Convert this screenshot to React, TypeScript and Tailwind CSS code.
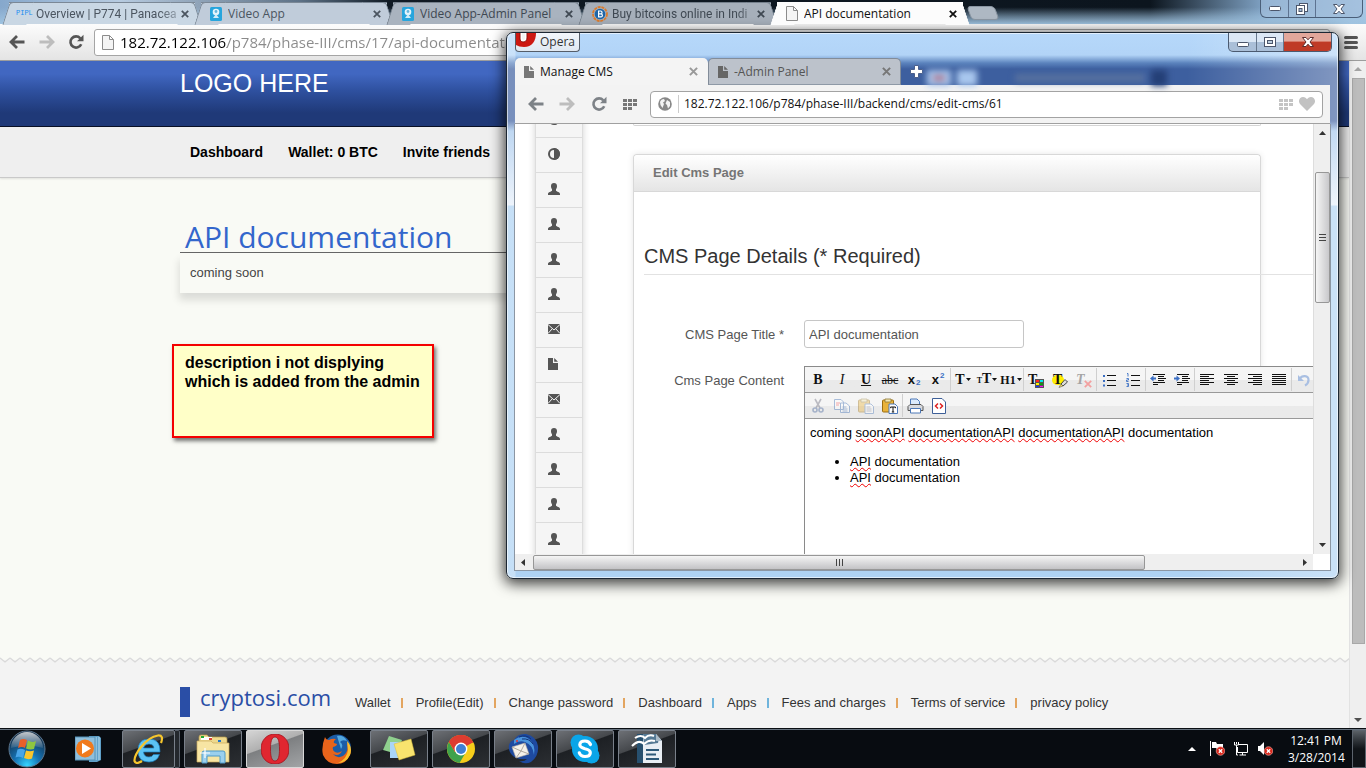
import React from "react";

const ui = "font-['Open_Sans','Noto_Sans',sans-serif]";
const arial = "font-['Liberation_Sans',Arial,sans-serif]";

/* ---------- small drawings ---------- */

function CloseX({ className = "" }: { className?: string }) {
  return (
    <svg viewBox="0 0 8 8" className={`size-2 ${className}`} stroke="currentColor" strokeWidth="1.8">
      <path d="M.8 .8 7.2 7.2M7.2 .8 .8 7.2" />
    </svg>
  );
}

function PageIcon() {
  return (
    <svg viewBox="0 0 12 15" className="h-[15px] w-3 shrink-0" fill="#f4f4f4" stroke="#8b8b8b">
      <path d="M.5 .5H7.5L11.5 4.5V14.5H.5ZM7.5 .5V4.5H11.5" />
    </svg>
  );
}

function DocIcon({ className = "h-3 w-[10px]" }: { className?: string }) {
  return (
    <svg viewBox="0 0 10 12" className={`shrink-0 ${className}`} fill="currentColor">
      <path d="M0 0H5V5H10V12H0ZM6.2 0 10 3.8H6.2Z" />
    </svg>
  );
}

function BackArrow() {
  return (
    <svg viewBox="0 0 16 14" className="h-[14px] w-4" fill="none" stroke="currentColor" strokeWidth="2.8">
      <path d="M15.5 7H2.5M8 1 2 7 8 13" />
    </svg>
  );
}

function Reload() {
  return (
    <svg viewBox="0 0 16 16" className="size-4" fill="none" stroke="currentColor" strokeWidth="2.6">
      <path d="M12.3 4.3A5.6 5.6 0 1 0 13.2 10.2" />
      <path d="M15.5 .8V7.2H9Z" fill="currentColor" stroke="none" />
    </svg>
  );
}

function Grid({ className = "" }: { className?: string }) {
  return (
    <svg viewBox="0 0 14 11" className={`h-[11px] w-[14px] ${className}`} fill="currentColor">
      <path d="M0 0h4v3H0zM5 0h4v3H5zM10 0h4v3h-4zM0 4h4v3H0zM5 4h4v3H5zM10 4h4v3h-4zM0 8h4v3H0zM5 8h4v3H5z" />
    </svg>
  );
}

function VideoFav() {
  return (
    <svg viewBox="0 0 12 14" className="h-[14px] w-3 shrink-0">
      <rect width="12" height="14" rx="1.5" fill="#27a5dd" />
      <circle cx="6" cy="5" r="3.3" fill="#e5f5fc" />
      <circle cx="6" cy="4.5" r="1.4" fill="#68b6dc" />
      <path d="M3 11 6 7 9 11Z" fill="#d3ecf7" />
    </svg>
  );
}

function BitcoinFav() {
  return (
    <svg viewBox="0 0 16 16" className="size-4 shrink-0">
      <circle cx="8" cy="8" r="7" fill="none" stroke="#dc7b2c" strokeWidth="1.8" strokeDasharray="3 .8" />
      <circle cx="8" cy="8" r="5.3" fill="#1f66a8" />
      <path d="M6 5h2.6a1.4 1.4 0 0 1 0 2.9H6.3h2.6a1.5 1.5 0 0 1 0 3H6M6.6 5v6" fill="none" stroke="#fff" strokeWidth="1.2" />
    </svg>
  );
}

function Minimize() {
  return (
    <svg viewBox="0 0 12 5" className="h-[5px] w-3" fill="#fff" stroke="#4c566b">
      <rect x=".5" y=".5" width="11" height="4" rx="1" />
    </svg>
  );
}

function BoldCross({ tone = "#4c566b" }: { tone?: string }) {
  return (
    <svg viewBox="0 0 12 10" className="h-[10px] w-3" fill="#fff" stroke={tone}>
      <path d="M.5 .5H4L6 2.8 8 .5H11.5L8 5 11.5 9.5H8L6 7.2 4 9.5H.5L4 5Z" />
    </svg>
  );
}

function UserIcon() {
  return (
    <svg viewBox="0 0 12 12" className="size-3" fill="currentColor">
      <path d="M6 0C7.9 0 9 1.2 9 3c0 1.400-.3 2.400-1 3.200v1.600C8.600 8.700 12 9 12 11v1H0v-1c0-2 3.400-2.300 4-3.200V6.200C3.300 5.400 3 4.400 3 3c0-1.800 1.100-3 3-3Z" />
    </svg>
  );
}

function MailIcon() {
  return (
    <svg viewBox="0 0 12 10" className="h-[10px] w-3">
      <rect width="12" height="10" fill="currentColor" />
      <path d="M0 .5 6 6 12 .5M0 9.500 4.200 4.800M12 9.500 7.800 4.800" fill="none" stroke="#f5f5f5" />
    </svg>
  );
}

function ContrastIcon() {
  return (
    <svg viewBox="0 0 12 12" className="size-3">
      <circle cx="6" cy="6" r="5" fill="none" stroke="currentColor" strokeWidth="2" />
      <path d="M6 0a6 6 0 0 1 0 12Z" fill="currentColor" />
    </svg>
  );
}

/* ---------- background browser ---------- */

type Tab = { title: string; icon: React.ReactNode; tone: string; active?: boolean; long?: boolean };

const tabs: Tab[] = [
  { title: "Overview | P774 | Panacea", long: true, icon: <span className="w-4 font-['Liberation_Mono',monospace] text-[7px] text-[#1d8df0]">PIPL</span>, tone: "bg-[#c9d7e4] border-[#7b8896] text-[#4b5560]" },
  { title: "Video App", icon: <VideoFav />, tone: "bg-[#c0ccda] border-[#7b8896] text-[#4b5560]" },
  { title: "Video App-Admin Panel", icon: <VideoFav />, tone: "bg-[#a9b3bf] border-[#75808c] text-[#3f4852]" },
  { title: "Buy bitcoins online in Indi", long: true, icon: <BitcoinFav />, tone: "bg-[#a6afba] border-[#75808c] text-[#3f4852]" },
  { title: "API documentation", icon: <PageIcon />, tone: "bg-[#fcfcfc] border-[#fcfcfc] text-[#111]", active: true },
];

function ChromeTabs() {
  return (
    <div className="flex h-6 items-end justify-between bg-[linear-gradient(180deg,transparent_30%,#9fc3e0_100%),linear-gradient(90deg,#86a8cc_0px,#b7cbe0_120px,#5d7186_300px,#101a24_390px,#0c151e_1150px,#86aacd_1270px,#a9c8e6_100%)]">
      <div role="tablist" className="flex h-[22px] gap-[6px] pl-[9px]">
        {tabs.map((t) => (
          <div
            key={t.title}
            role="tab"
            aria-selected={!!t.active}
            className={`relative isolate flex w-[186px] items-center border-t pr-[6px] text-[12px] before:absolute before:-top-px before:-left-[3px] before:-z-10 before:h-[23px] before:w-6 before:-skew-x-[18deg] before:rounded-tl-[4px] before:border-t before:border-l before:border-inherit before:bg-inherit after:absolute after:-top-px after:-right-[3px] after:-z-10 after:h-[23px] after:w-6 after:skew-x-[18deg] after:rounded-tr-[4px] after:border-t after:border-r after:border-inherit after:bg-inherit ${t.tone} ${t.long ? "pl-[7px]" : "pl-[9px]"} ${t.active ? "z-10" : ""}`}
          >
            {t.icon}
            <span className={`min-w-0 flex-1 overflow-hidden whitespace-nowrap ${t.long ? "ml-1 font-['Roboto','Open_Sans',sans-serif] [mask-image:linear-gradient(90deg,#000_85%,rgba(0,0,0,.25))]" : "ml-[6px]"}`}>{t.title}</span>
            <button aria-label={`Close ${t.title}`}>
              <CloseX />
            </button>
          </div>
        ))}
        <button aria-label="New tab" className="mt-1 h-[14px] w-7 skew-x-[20deg] rounded-sm border border-[#8b96a2] bg-[#aeb8c3]" />
      </div>
      <div className="mr-[3px] flex h-[18px] w-[103px] self-start rounded-b-md border border-t-0 border-[#4b5f79] bg-[#a3bedb]/60">
        <button aria-label="Minimize browser" className="flex w-7 items-center justify-center border-r border-[#5d7391]"><Minimize /></button>
        <button aria-label="Restore browser" className="flex w-[27px] items-center justify-center border-r border-[#5d7391]">
          <svg viewBox="0 0 12 12" className="size-3" fill="#fff" stroke="#4c566b">
            <rect x="3.500" y=".5" width="8" height="8" />
            <rect x=".5" y="2.500" width="8" height="9" />
            <rect x="3" y="5.500" width="3" height="3" fill="#a3bedb" />
          </svg>
        </button>
        <button aria-label="Close browser" className="flex flex-1 items-center justify-center"><BoldCross /></button>
      </div>
    </div>
  );
}

function ChromeToolbar() {
  return (
    <div className="flex h-[37px] items-center border-b border-[#9d9d9d] bg-linear-to-b from-[#fcfcfc] to-[#e4e4e4] pr-2 pl-[9px] text-[#555]">
      <button aria-label="Back" className="flex w-[30px]"><BackArrow /></button>
      <button aria-label="Forward" className="flex w-[29px] rotate-180 justify-end text-[#bdbdbd]"><BackArrow /></button>
      <button aria-label="Reload" className="flex w-[26px]"><Reload /></button>
      <div className="flex h-[27px] flex-1 items-center gap-[6px] rounded-[3px] border border-[#a5a5a5] bg-white pl-[7px]">
        <PageIcon />
        <input
          aria-label="Address"
          defaultValue="182.72.122.106/p784/phase-III/cms/17/api-documentation"
          className="min-w-0 flex-1 bg-[linear-gradient(90deg,#000_107px,#8a8a8a_107px)] bg-clip-text text-[15px] text-transparent outline-none"
        />
      </div>
      <button aria-label="Menu" className="ml-[14px] flex w-[14px] flex-col gap-[2px]">
        <span className="h-[3px] w-full rounded-sm bg-[#555]" />
        <span className="h-[3px] w-full rounded-sm bg-[#555]" />
        <span className="h-[3px] w-full rounded-sm bg-[#555]" />
      </button>
    </div>
  );
}

const footerLinks = ["Wallet", "Profile(Edit)", "Change password", "Dashboard", "Apps", "Fees and charges", "Terms of service", "privacy policy"];

function SitePage() {
  return (
    <div className={`relative flex min-w-0 flex-1 flex-col overflow-hidden bg-[#f9faf5] ${arial}`}>
      <header className="h-[66px] border-b border-[#0a1126] bg-linear-to-b from-[#4167c1] from-20% via-[#2f51a0] via-45% to-[#1f3978] to-80%">
        <div className="mx-auto w-full max-w-[989px] pt-[7px] text-[25px] leading-[30px] text-white">LOGO HERE</div>
      </header>
      <nav className="border-b border-[#c9c9c9] bg-[#efefef] shadow-[0_1px_2px_rgba(0,0,0,.1)]">
        <div className="mx-auto flex h-[50px] w-full max-w-[989px] items-center gap-[25px] pl-[10px] text-[14px] font-bold text-black">
          <a href="#dashboard">Dashboard</a>
          <a href="#wallet">Wallet: 0 BTC</a>
          <a href="#invite">Invite friends</a>
        </div>
      </nav>
      <main className="mx-auto w-full max-w-[989px] flex-1">
        <h1 className={`flex h-[75px] items-end border-b border-[#666] pl-[5px] text-[30px] leading-[30px] text-[#3366cc] ${ui}`}>API documentation</h1>
        <p className="pt-[10px] pb-[10px] pl-[10px] text-[13px] leading-5 text-[#444] shadow-[-1px_7px_8px_rgba(0,0,0,.12)]">coming soon</p>
      </main>
      <div className="absolute top-[283px] left-[172px] h-[94px] w-[262px] border-2 border-[#f40000] bg-[#ffffc8] pt-[7px] pl-[11px] text-[16px] leading-[19px] font-bold text-black shadow-[2px_3px_4px_rgba(0,0,0,.55)]">
        description i not displying
        <br />
        which is added from the admin
      </div>
      <footer className="relative h-[68px] bg-[#f3f3f3]">
        <svg className="absolute -top-[3px] left-0 h-[6px] w-full">
          <defs>
            <pattern id="zigzag" width="10" height="6" patternUnits="userSpaceOnUse">
              <path d="M0 0 5 4 10 0V6H0Z" fill="#f3f3f3" />
              <path d="M0 1 5 5 10 1" fill="none" stroke="#d9d9d9" strokeWidth="1.200" />
            </pattern>
          </defs>
          <rect width="100%" height="6" fill="url(#zigzag)" />
        </svg>
        <div className="mx-auto flex w-full max-w-[989px] items-start pt-[27px]">
          <span className="h-[30px] w-[10px] bg-[#2a4ea6]" />
          <span className={`w-[165px] pl-[10px] text-[22px] leading-5 text-[#2a4ea6] ${ui}`}>cryptosi.com</span>
          <div className="flex items-center pt-2 text-[13px] leading-4 whitespace-nowrap text-[#333]">
            {footerLinks.map((l, i) => (
              <React.Fragment key={l}>
                {i > 0 && <span className={`mr-[13px] ml-[10px] h-[10px] w-[2px] ${i === 4 || i === 5 ? "bg-[#6fb4dc]" : "bg-[#e3a560]"}`} />}
                <a href="#footer">{l}</a>
              </React.Fragment>
            ))}
          </div>
        </div>
      </footer>
    </div>
  );
}

function ChromeScrollbar() {
  return (
    <div className="flex w-[17px] flex-col items-center border-l border-[#e2e2e2] bg-[#efefef] py-[6px]">
      <svg viewBox="0 0 8 4" className="h-1 w-2" fill="#a3a3a3"><path d="M0 4 4 0 8 4Z" /></svg>
      <div className="mt-[7px] mb-[74px] w-[13px] flex-1 border border-[#a8a8a8] bg-[#bcbcbc]" />
      <svg viewBox="0 0 8 4" className="h-1 w-2" fill="#505050"><path d="M0 0 4 4 8 0Z" /></svg>
    </div>
  );
}

/* ---------- rich text toolbar ---------- */

const serif = "font-['Liberation_Serif',serif]";

function Caret() {
  return <svg viewBox="0 0 5 3" className="h-[3px] w-[5px]" fill="#111"><path d="M0 0H5L2.500 3Z" /></svg>;
}

function Lines({ d, children }: { d: string; children?: React.ReactNode }) {
  return (
    <svg viewBox="0 0 16 16" className="size-4">
      <path d={d} stroke="#111" strokeWidth="1" fill="none" />
      {children}
    </svg>
  );
}

const tools: ({ name: string; draw: React.ReactNode } | null)[] = [
  { name: "Bold", draw: <b className={`${serif} text-[14px]`}>B</b> },
  { name: "Italic", draw: <i className={`${serif} text-[14px]`}>I</i> },
  { name: "Underline", draw: <u className={`${serif} text-[14px] font-bold`}>U</u> },
  { name: "Strike", draw: <s className={`${serif} text-[12px]`}>abc</s> },
  { name: "Subscript", draw: <><b className="text-[13px]">x</b><b className="self-end text-[8px] leading-4 text-[#3b6fc4]">2</b></> },
  { name: "Superscript", draw: <><b className="text-[13px]">x</b><b className="self-start text-[8px] leading-4 text-[#3b6fc4]">2</b></> },
  null,
  { name: "Font", draw: <><b className={`${serif} text-[14px]`}>T</b><Caret /></> },
  { name: "Size", draw: <><span className={`${serif} text-[14px] font-bold`}><small className="text-[8px]">T</small>T</span><Caret /></> },
  { name: "Heading", draw: <><span className={`${serif} text-[12px] font-bold`}>H1</span><Caret /></> },
  null,
  {
    name: "Text colour",
    draw: (
      <span className={`relative flex size-4 items-center ${serif}`}>
        <b className="text-[14px]">T</b>
        <svg viewBox="0 0 9 9" className="absolute right-0 bottom-0 size-[9px]">
          <path d="M0 0h9v9H0z" fill="#555" />
          <path d="M1 1h3v2H1z" fill="#f22" /><path d="M5 1h3v2H5z" fill="#0ee" />
          <path d="M1 4h3v2H1z" fill="#fe0" /><path d="M5 4h3v2H5z" fill="#191" />
          <path d="M1 7h3v1H1z" fill="#13f" /><path d="M5 7h3v1H5z" fill="#f0f" />
        </svg>
      </span>
    ),
  },
  {
    name: "Highlight",
    draw: (
      <span className={`relative flex size-4 items-center ${serif}`}>
        <span className="h-[10px] w-3 rounded-full bg-[#ffee00]" />
        <b className="absolute left-px text-[14px]">T</b>
        <svg viewBox="0 0 10 9" className="absolute right-0 bottom-0 h-[9px] w-[10px]">
          <path d="M3 5 7 .5 9.500 3 5 7Z" fill="#ddd" stroke="#444" /><path d="M1 8.500 3 5 5 7Z" fill="#f4dc6a" stroke="#444" strokeWidth=".5" />
        </svg>
      </span>
    ),
  },
  {
    name: "Remove format",
    draw: (
      <span className={`relative flex size-4 items-center ${serif}`}>
        <i className="text-[14px] font-bold text-[#a5a5a5]">T</i>
        <CloseX className="absolute right-0 bottom-0 text-[#f2a0a0]" />
      </span>
    ),
  },
  null,
  { name: "Bullets", draw: <Lines d="M6 3.500h9M6 8.500h9M6 13.500h9"><path d="M2 3h2v2H2zM2 8h2v2H2zM2 12.500h2v2H2z" fill="#3b6fc4" /></Lines> },
  { name: "Numbering", draw: <Lines d="M6 3.500h9M6 8.500h9M6 13.500h9"><path d="M2 1.500h1v3M1.500 6.500h2v1.500h-2v1.500h2M1.500 11.500h2v3h-2M2 13h1" fill="none" stroke="#3b6fc4" strokeWidth=".9" /></Lines> },
  null,
  { name: "Outdent", draw: <Lines d="M3 2.500h12M8 4.500h6M8 6.500h8M8 8.500h6M3 10.500h12M3 12.500h5"><path d="M0 6.500 3.500 3.500V5.500H6V7.500H3.500V9.500Z" fill="#3b6fc4" /></Lines> },
  { name: "Indent", draw: <Lines d="M3 2.500h12M8 4.500h6M8 6.500h8M8 8.500h6M3 10.500h12M3 12.500h5"><path d="M6 6.500 2.500 3.500V5.500H0V7.500H2.500V9.500Z" fill="#3b6fc4" /></Lines> },
  null,
  { name: "Left", draw: <Lines d="M1 2.500h14M1 4.500h9M1 6.500h14M1 8.500h9M1 10.500h14M1 12.500h9" /> },
  { name: "Centre", draw: <Lines d="M1 2.500h14M4 4.500h8M1 6.500h14M4 8.500h8M1 10.500h14M4 12.500h8" /> },
  { name: "Right", draw: <Lines d="M1 2.500h14M6 4.500h9M1 6.500h14M6 8.500h9M1 10.500h14M6 12.500h9" /> },
  { name: "Justify", draw: <Lines d="M1 2.500h14M1 4.500h14M1 6.500h14M1 8.500h14M1 10.500h14M1 12.500h14" /> },
  null,
  { name: "Undo", draw: <svg viewBox="0 0 14 14" className="size-[14px]" fill="none" stroke="#a9bfe2" strokeWidth="2.200"><path d="M2.500 6C5 2 11.500 2 11.500 7c0 3-1.500 4.500-3.500 5.500" /><path d="M1 2v6h6Z" fill="#a9bfe2" stroke="none" /></svg> },
];

function Clipboard({ faded, text }: { faded?: boolean; text?: boolean }) {
  return (
    <svg viewBox="0 0 16 16" className={faded ? "size-4 opacity-40" : "size-4"}>
      <rect x=".5" y="2" width="11" height="12" rx="1" fill="#e8b23a" stroke="#9a6d10" />
      <path d="M3 1h6v3H3z" fill="#f4e7b0" stroke="#8b7430" strokeWidth=".8" />
      <path d="M7 6h6l2.500 2.500V15.500H7Z" fill="#fff" stroke="#4d79b8" />
      {text ? <path d="M8.500 9h5M11 9v5M9.800 14h2.400M8.700 9v1.200M13.400 9v1.200" stroke="#111" /> : <path d="M8.500 9h4M8.500 11h5M8.500 13h5" stroke="#889" />}
    </svg>
  );
}

const tools2: ({ name: string; draw: React.ReactNode } | null)[] = [
  { name: "Cut", draw: <svg viewBox="0 0 12 15" className="h-[15px] w-3 opacity-40" fill="none" stroke="#3f5f98" strokeWidth="1.600"><path d="M3 1 8 10M9 1 4 10" stroke="#667" /><circle cx="3" cy="12" r="2" /><circle cx="9" cy="12" r="2" /></svg> },
  { name: "Copy", draw: <svg viewBox="0 0 16 14" className="h-[14px] w-4 opacity-45" fill="#fff" stroke="#4d79b8"><path d="M.5 .5H7L9.500 3V10.500H.5ZM6.500 4H12L15.500 7V13.500H6.500Z" /><path d="M2 4h4M2 6h3" stroke="#e44" /><path d="M8.500 8h4M8.500 10h5M8.500 12h5" /></svg> },
  { name: "Paste", draw: <Clipboard faded /> },
  { name: "Paste as text", draw: <Clipboard text /> },
  null,
  { name: "Print", draw: <svg viewBox="0 0 17 16" className="h-4 w-[17px]"><path d="M3.500 8V1H10L12.500 3.500V8" fill="#dcebfc" stroke="#4d79b8" /><path d="M1 8.500 3 6.500H14L16 8.500V12.500H1Z" fill="#d8dade" stroke="#555" /><path d="M3.500 10.500H13.500V15H3.500Z" fill="#fff" stroke="#4d79b8" /></svg> },
  { name: "Source", draw: <svg viewBox="0 0 14 16" className="h-4 w-[14px]"><path d="M.5 .5H10L13.500 4V15.500H.5Z" fill="#fff" stroke="#3d5f98" /><path d="M6 5.500 3.500 8 6 10.500M8 5.500 10.500 8 8 10.500" fill="none" stroke="#d22" strokeWidth="1.500" /></svg> },
];

function ToolRow({ items, label }: { items: ({ name: string; draw: React.ReactNode } | null)[]; label: string }) {
  return (
    <div role="toolbar" aria-label={label} className={`flex h-[26px] border-b border-[#999] bg-linear-to-b from-[#f5f5f5] from-50% to-[#eaeaea] to-50% py-px pl-px ${arial}`}>
      {items.map((t, i) =>
        t ? (
          <button key={t.name} aria-label={t.name} className="flex w-6 shrink-0 items-center justify-center gap-px leading-4 whitespace-nowrap text-[#111]">
            {t.draw}
          </button>
        ) : (
          <span key={i} className="w-px shrink-0 bg-[#cfcfcf]" />
        ),
      )}
    </div>
  );
}

/* ---------- foreground window ---------- */

const sideIcons = ["contrast", "contrast", "user", "user", "user", "user", "mail", "doc", "mail", "user", "user", "user", "user"];

function Misspelt({ children }: { children: string }) {
  return <span className="underline decoration-[#f00000] decoration-wavy decoration-1 underline-offset-1">{children}</span>;
}

function CmsPage() {
  return (
    <div className={`flex h-[430px] min-w-0 flex-1 overflow-hidden bg-white ${arial}`}>
      <aside className="-mt-[21px] ml-[20px] w-12 shrink-0 self-start border-x border-[#ddd] bg-[#f5f5f5] text-[#555] shadow-[0_0_7px_rgba(0,0,0,.18)]">
        {sideIcons.map((k, i) => (
          <a key={i} href="#menu" aria-label={k} className="flex h-[35px] items-center border-b border-[#dcdcdc] pb-[2px] pl-3">
            {k === "user" ? <UserIcon /> : k === "mail" ? <MailIcon /> : k === "doc" ? <DocIcon /> : <ContrastIcon />}
          </a>
        ))}
      </aside>
      <div className="ml-[50px] flex w-[628px] shrink-0 flex-col">
        <div className="h-[2px] shrink-0 rounded-b border-x border-b border-[#d5d5d5]" />
        <section className="mt-7 flex-1 rounded-t border border-b-0 border-[#d8d8d8] shadow-[0_0_6px_rgba(0,0,0,.1)]">
          <h2 className="flex h-[37px] items-center rounded-t border-b border-[#d8d8d8] bg-linear-to-b from-white to-[#e5e5e5] pl-[19px] text-[13px] font-bold text-[#757575]">Edit Cms Page</h2>
          <form className="ml-[10px] w-[800px]">
            <h3 className="flex h-[83px] items-end border-b border-[#e2e2e2] pb-2 text-[20px] leading-5 text-[#333]">CMS Page Details (* Required)</h3>
            <div className="mt-[45px] flex items-center gap-5 text-[13px] text-[#555]">
              <label htmlFor="title" className="w-[140px] pt-px text-right">CMS Page Title *</label>
              <input id="title" defaultValue="API documentation" className="h-7 w-[220px] rounded-[3px] border border-[#c6c6c6] bg-white px-1 outline-none" />
            </div>
            <div className="mt-[18px] flex gap-5 text-[13px]">
              <span id="content-label" className="w-[140px] pt-[5px] text-right leading-5 text-[#555]">Cms Page Content</span>
              <div className="flex-1 border-t border-l border-[#8a8a8a] bg-white">
                <ToolRow items={tools} label="Formatting" />
                <ToolRow items={tools2} label="Clipboard" />
                <div role="textbox" aria-labelledby="content-label" contentEditable suppressContentEditableWarning spellCheck={false} className="h-[200px] pt-[6px] pl-[5px] leading-4 text-black outline-none">
                  <p>
                    coming <Misspelt>soonAPI</Misspelt> <Misspelt>documentationAPI</Misspelt> <Misspelt>documentationAPI</Misspelt> documentation
                  </p>
                  <ul className="mt-[13px] list-disc pl-10">
                    <li><Misspelt>API</Misspelt> documentation</li>
                    <li><Misspelt>API</Misspelt> documentation</li>
                  </ul>
                </div>
              </div>
            </div>
          </form>
        </section>
      </div>
    </div>
  );
}

function OperaWindow() {
  return (
    <section
      aria-label="Manage CMS window"
      className="absolute top-8 left-[506px] flex w-[833px] flex-col rounded-[7px] border border-[#1c2733] bg-[linear-gradient(90deg,rgba(255,255,255,.3)_0px,rgba(255,255,255,.3)_8px,transparent_9px,transparent_680px,rgba(255,255,255,.35)_100%),linear-gradient(180deg,#b6d8fa_0px,#b2d4f7_22px,#5b83bd_30px,#3d5f9f_36px,#3d5f9f_88px,#a3c6ec_98px,#e6effa_172px,#aed2f3_173px,#aed2f3_100%)] px-2 pb-[7px] shadow-[0_3px_14px_2px_rgba(0,0,0,.75),inset_0_0_0_1px_rgba(255,255,255,.6)]"
    >
      <div className="flex h-[25px] items-start justify-between">
        <button className="flex h-[19px] w-[65px] items-center gap-1 overflow-hidden rounded-b-[4px] border border-t-0 border-[#555d68] bg-linear-to-b from-[#f2f6fb] to-[#e0e8f1] text-[12px] text-[#333]">
          <svg viewBox="0 0 20 15" className="h-[15px] w-5 shrink-0 self-start">
            <path d="M0 0H20C20 8 16 14 8 14Q3 14 0 12Z" fill="#cc1812" />
            <path d="M4 0V6C4 10 11 10 11 5V0" fill="#fff" stroke="#8c0e0a" />
            <path d="M6 0V5C6 7.500 9 7.500 9 5V0" fill="#f4f4f4" />
          </svg>
          Opera
        </button>
        <div className="-mr-[2px] flex h-[19px] w-[104px] overflow-hidden rounded-b-[5px] border border-t-0 border-[#4b5a70] bg-linear-to-b from-[#dbe7f5] from-50% to-[#aabfd8] to-50%">
          <button aria-label="Minimize" className="flex w-7 items-center justify-center border-r border-[#66778d] pt-1"><Minimize /></button>
          <button aria-label="Maximize" className="flex w-[27px] items-center justify-center border-r border-[#66778d]">
            <svg viewBox="0 0 12 10" className="h-[10px] w-3" fill="#fff" stroke="#4c566b"><rect x=".5" y=".5" width="11" height="9" /><rect x="3.500" y="3.500" width="5" height="3" fill="#bcd" /></svg>
          </button>
          <button aria-label="Close" className="flex flex-1 items-center justify-center bg-linear-to-b from-[#e2a79b] from-45% to-[#bf3a26] to-50%"><BoldCross tone="#5d2c2c" /></button>
        </div>
      </div>
      <div role="tablist" className="flex h-[27px] text-[12px]">
        <div role="tab" aria-selected className="flex w-[193px] items-center gap-[6px] rounded-t-[5px] bg-[#f4f4f4] px-[9px] text-[#111]">
          <span className="text-[#777]"><DocIcon /></span>
          <span className="flex-1">Manage CMS</span>
          <button aria-label="Close tab" className="mr-px text-[#999]"><CloseX className="size-[9px]" /></button>
        </div>
        <div role="tab" aria-selected={false} className="flex w-[193px] items-center gap-[6px] rounded-t-[5px] border border-b-[#8e99a6] border-[#828c99] bg-[#bcc2cb] px-[9px] text-[#555]">
          <span className="text-[#666]"><DocIcon /></span>
          <span className="flex-1">-Admin Panel</span>
          <button aria-label="Close tab" className="text-[#777]"><CloseX className="size-[9px]" /></button>
        </div>
        <button aria-label="New tab" className="ml-[9px]">
          <svg viewBox="0 0 13 13" className="size-[13px]" fill="#fff" stroke="#4a5f8c"><path d="M4.500 .5h4v4h4v4h-4v4h-4v-4h-4v-4h4z" /></svg>
        </button>
        <div className="flex items-center gap-[6px] pt-[12px] pl-1 blur-[3px]">
          <span className="flex h-4 w-6 items-center justify-center bg-[#a9c7ee]"><span className="h-1 w-3 bg-[#b0596a]" /></span>
          <span className="h-4 w-5 bg-[#a9c7ee]" />
          <span className="ml-8 h-2 w-[130px] bg-[#57719f]" />
          <span className="size-4 bg-[#243f76]" />
        </div>
      </div>
      <div className="flex h-[39px] items-center border-b border-[#a0a0a0] bg-[#f3f3f3] pr-[7px] pl-[13px] text-[#7d8287]">
        <button aria-label="Back" className="flex w-[31px]"><BackArrow /></button>
        <button aria-label="Forward" className="flex w-4 rotate-180 text-[#bdbdbd]"><BackArrow /></button>
        <button aria-label="Reload" className="ml-4 flex w-8"><Reload /></button>
        <button aria-label="Speed dial" className="flex w-[27px] text-[#777]"><Grid /></button>
        <div className="flex h-[27px] flex-1 items-center rounded-[4px] border border-[#a3a3a3] bg-white pr-[7px] pl-[7px]">
          <svg viewBox="0 0 14 14" className="size-[14px]"><circle cx="7" cy="7" r="6.800" fill="#888" /><path d="M2 5Q3 2 6 2L7 4 5 5.500 6 7 4.500 11 2.500 8ZM9 3 12 5 12 9 10 11.500 9 8 7.500 6.500Z" fill="#f4f4f4" /></svg>
          <span className="ml-[6px] h-[18px] w-px bg-[#ccc]" />
          <input aria-label="Page address" defaultValue="182.72.122.106/p784/phase-III/backend/cms/edit-cms/61" className="ml-[5px] min-w-0 flex-1 text-[12px] text-[#111] outline-none" />
          <Grid className="text-[#c4c4c4]" />
          <svg viewBox="0 0 16 14" className="ml-[6px] h-[14px] w-4" fill="#c2c2c2"><path d="M8 14 1 7C-1.500 3.500 1 0 4 0 6 0 7.300 1 8 2.300 8.700 1 10 0 12 0 15 0 17.500 3.500 15 7Z" /></svg>
        </div>
      </div>
      <div className="-mx-px flex border-x border-[#8b96a3] bg-white">
        <CmsPage />
        <div className="flex w-[17px] flex-col items-center border-l border-[#ddd] bg-[#efefef] py-[7px]">
          <svg viewBox="0 0 7 4" className="h-1 w-[7px]" fill="#333"><path d="M0 4 3.500 0 7 4Z" /></svg>
          <div className="mt-[37px] flex h-[131px] w-[15px] flex-col items-center justify-center gap-[2px] rounded-[2px] border border-[#979797] bg-linear-to-r from-[#f5f5f5] to-[#c8c8cb]">
            <span className="h-px w-[7px] bg-[#444]" />
            <span className="h-px w-[7px] bg-[#444]" />
            <span className="h-px w-[7px] bg-[#444]" />
          </div>
          <svg viewBox="0 0 7 4" className="mt-auto h-1 w-[7px]" fill="#333"><path d="M0 0 3.500 4 7 0Z" /></svg>
        </div>
      </div>
      <div className="-mx-px flex h-[17px] items-center border-x border-b border-[#8b96a3] bg-white pr-[17px]">
        <div className="flex h-full flex-1 items-center bg-[#efefef] pr-[6px] pl-[6px]">
          <svg viewBox="0 0 4 7" className="h-[7px] w-1" fill="#333"><path d="M4 0 0 3.500 4 7Z" /></svg>
          <div className="ml-2 flex h-[15px] w-[612px] items-center justify-center gap-[2px] rounded-[2px] border border-[#979797] bg-linear-to-b from-[#f5f5f5] to-[#c3c3c6]">
            <span className="h-[7px] w-px bg-[#444]" />
            <span className="h-[7px] w-px bg-[#444]" />
            <span className="h-[7px] w-px bg-[#444]" />
          </div>
          <svg viewBox="0 0 4 7" className="ml-auto h-[7px] w-1" fill="#333"><path d="M0 0 4 3.500 0 7Z" /></svg>
        </div>
      </div>
    </section>
  );
}

/* ---------- taskbar ---------- */

const frame = "border border-[#79808a] bg-[linear-gradient(160deg,#6d7075_0%,#45484c_40%,#1d2024_42%,#2c2f33_100%)]";

const apps: { name: string; skin: string; icon: React.ReactNode }[] = [
  {
    name: "Explorer", skin: frame,
    icon: (
      <svg viewBox="0 0 34 30" className="h-[30px] w-[34px]">
        <path d="M3 3Q3 1 5 1H11L13 3H29Q31 3 31 5V12H3Z" fill="#eed98d" stroke="#b79b4c" strokeWidth=".7" />
        <path d="M5 3h11v3H5z" fill="#fff" /><path d="M5 2h3v2H5z" fill="#2a3" /><path d="M13 4h3v2h-3z" fill="#d43" /><path d="M22 6h3v2h-3z" fill="#27c" />
        <path d="M1 7H15L17 9H33V28H1Z" fill="#f7e5a3" stroke="#c9ab5b" strokeWidth=".7" />
        <path d="M6 29V19Q6 17 8 17H27Q29 17 29 19V29H24V22H11V29Z" fill="#9bd0ee" stroke="#4f9ac8" />
        <path d="M9 14v10M4 19h10" stroke="#fff" strokeWidth="1.200" />
      </svg>
    ),
  },
  {
    name: "Opera", skin: "border border-[#d8d8d8] bg-[linear-gradient(160deg,#d5d5d5_0%,#b0b0b0_40%,#7d7f81_42%,#a2a4a6_100%)]",
    icon: <svg viewBox="0 0 28 30" className="h-[30px] w-7"><path fillRule="evenodd" d="M14 0C22 0 28 6 28 15S22 30 14 30 0 24 0 15 6 0 14 0ZM14 3C10.500 3 9.500 8 9.500 15S10.500 27 14 27 18.500 22 18.500 15 17.500 3 14 3Z" fill="#e02630" stroke="#a3121c" strokeWidth=".8" /></svg>,
  },
  {
    name: "Firefox", skin: "",
    icon: (
      <svg viewBox="0 0 30 30" className="size-[30px]">
        <circle cx="15.500" cy="14" r="13.500" fill="#1b5da8" /><path d="M15 2Q22 1 25 7 20 5 18 8 22 11 19 15Z" fill="#53a8df" />
        <path d="M3 3Q4 6 7 6 10 4 14 5 11 7 12 9L15 10Q15 12 11 13 10 16 13 18 16 20 20 17 17 23 11 20 15 25 21 22 27 18 25 9 30 14 28 21 24 30 15 30 5 30 1 21-1 13 3 3Z" fill="#e8641b" />
        <path d="M25 7Q31 13 28 21 24 29 16 29 25 25 26 16Z" fill="#f9bf2d" />
      </svg>
    ),
  },
  {
    name: "Sticky Notes", skin: frame,
    icon: <svg viewBox="0 0 33 25" className="h-[25px] w-[33px]"><path d="M6 0 19 4 14 18 0 14Z" fill="#8fd08e" /><path d="M7 6H21V22H7Z" fill="#a9d5f7" /><path d="M11 8 28 3 32 19 16 24Z" fill="#f8e36e" stroke="#d8bd3a" strokeWidth=".5" /></svg>,
  },
  {
    name: "Chrome", skin: frame,
    icon: (
      <svg viewBox="0 0 28 28" className="size-7">
        <circle cx="14" cy="14" r="14" fill="#f6cd1b" />
        <path d="M14 14 1.900 7A14 14 0 0 1 26.200 7.200Z" fill="#dc3c30" /><path d="M1.900 7A14 14 0 0 0 12.500 27.900L19 17 8 17Z" fill="#3fa24b" /><path d="M14 7.500H26.300A14 14 0 0 0 1.900 7L8 17Z" fill="#dc3c30" />
        <circle cx="14" cy="14" r="6.400" fill="#fff" /><circle cx="14" cy="14" r="5" fill="#3f80d3" />
      </svg>
    ),
  },
  {
    name: "Thunderbird", skin: frame,
    icon: (
      <svg viewBox="0 0 31 31" className="size-[31px]">
        <path d="M1 12Q2 8 6 7 10 0 18 1 28 3 30 13 31 23 23 29 17 32 11 28 16 29 19 26 8 27 4 22 0 18 1 12Z" fill="#1e4aa0" />
        <path d="M6 7Q14 1 21 6 28 12 26 22 25 12 17 9 11 7 6 11Z" fill="#4a94dc" />
        <path d="M11 4Q18 1 23 6M14 6Q21 5 25 11" fill="none" stroke="#123478" strokeWidth="1" />
        <path d="M4 14 17 10 21 21 8 25Z" fill="#f5f1ea" stroke="#b8b0a4" strokeWidth=".6" /><path d="M4 14 13 18 17 10M8 25 13 18 21 21" fill="none" stroke="#9d968c" strokeWidth=".8" />
        <circle cx="9" cy="8" r="1" fill="#d33" />
      </svg>
    ),
  },
  {
    name: "Skype", skin: frame,
    icon: (
      <svg viewBox="0 0 30 30" className="size-[30px]">
        <circle cx="15" cy="15" r="13" fill="#0aa5e8" /><circle cx="8.500" cy="8.500" r="8" fill="#0aa5e8" /><circle cx="21.500" cy="21.500" r="8" fill="#0aa5e8" />
        <path d="M20.500 10.500Q19 7 15 7 10 7 9.800 10.800 9.800 13.500 15 14.700 20.500 15.800 20.300 18.800 20 22.500 15 22.500 10.500 22.500 9.300 18.800" fill="none" stroke="#fff" strokeWidth="3.200" strokeLinecap="round" />
      </svg>
    ),
  },
  {
    name: "Writer", skin: frame,
    icon: (
      <svg viewBox="0 0 32 31" className="h-[31px] w-8">
        <path d="M6 1H25L31 8V30H6Z" fill="#e8eef4" /><path d="M6 1H12V30H6Z" fill="#27506f" /><path d="M12 1H25L28 5 27 10 13 12Z" fill="#567a95" /><path d="M25 1V8H31Z" fill="#a9bac7" />
        <path d="M1 13Q8 6 13 11 18 6 24 8M4 5Q10 1 14 5 18 1 23 3" fill="none" stroke="#fff" strokeWidth="2" />
        <path d="M15 17h13M15 21.500h10M15 26h13" stroke="#2c5878" strokeWidth="1.800" />
      </svg>
    ),
  },
];

function RedBadge() {
  return <g><circle cx="11.500" cy="10" r="4.300" fill="#d9281c" stroke="#f5b5ae" strokeWidth=".6" /><path d="M9.800 8.300l3.400 3.400M13.200 8.300l-3.400 3.400" stroke="#fff" strokeWidth="1.300" /></g>;
}

function Taskbar() {
  return (
    <div className="relative z-10 flex h-10 shrink-0 items-center border-t border-[#0a0e13] bg-[#080c11] text-white shadow-[inset_0_1px_0_#67737f]">
      <button aria-label="Start" className="flex w-[54px] shrink-0 justify-center">
        <svg viewBox="0 0 38 38" className="size-[38px]">
          <defs>
            <radialGradient id="orb" cx=".5" cy=".95" r=".9"><stop offset="0" stopColor="#35d5ff" /><stop offset=".4" stopColor="#1673b4" /><stop offset="1" stopColor="#12283f" /></radialGradient>
            <linearGradient id="gloss" x2="0" y2="1"><stop offset="0" stopColor="#fff" stopOpacity=".75" /><stop offset="1" stopColor="#fff" stopOpacity=".1" /></linearGradient>
          </defs>
          <circle cx="19" cy="19" r="18" fill="url(#orb)" stroke="#5d7890" />
          <path d="M3 18A16 16 0 0 1 35 18Q19 13 3 18Z" fill="url(#gloss)" />
          <path d="M12 10Q15 8 19 10L17 18Q14 16 10 18Z" fill="#e8602a" /><path d="M20 10.500Q24 13 28 11L26 19Q22 20 18 18.500Z" fill="#8fc640" />
          <path d="M9.500 19.500Q13 18 17 20L15 28Q11 26 7.500 27.500Z" fill="#48a5e8" /><path d="M18 20.500Q22 22 26 20.500L24 28.500Q20 30 16 28Z" fill="#fbc62d" />
        </svg>
      </button>
      <button aria-label="Media Player" className="flex w-[68px] shrink-0 justify-center">
        <svg viewBox="0 0 27 26" className="h-[26px] w-[27px]">
          <path d="M14 0H24L26 2V24L22 26H14Z" fill="#5fa0c8" /><path d="M21 1V24M24 1V24" stroke="#bde0f2" />
          <rect y="1" width="20" height="23" fill="#8fbfdc" stroke="#5592b8" /><circle cx="10" cy="12.500" r="9" fill="#f07a1d" /><path d="M7 7 16 12.500 7 18Z" fill="#fff" />
        </svg>
      </button>
      <button aria-label="Internet Explorer" className="flex h-[38px] w-[58px] shrink-0">
        <span className={`flex h-full w-[53px] items-center justify-center rounded-[2px] ${frame}`}>
          <svg viewBox="0 0 32 30" className="h-[30px] w-8">
            <path d="M27 18H10.500Q11 23 16 23 19 23 20.500 20.500H26.500Q24 28 16 28 5 28 5 16.500 5 5 16 5 27.500 5 27 18ZM10.500 14H21Q20.500 10 16 10 11.500 10 10.500 14Z" fill="#5cc3f4" stroke="#1b7fc0" strokeWidth=".7" />
            <path d="M28 9Q31 1 25 1.500 16 3 8 13 1 22 1.500 27 3 31 9 27" fill="none" stroke="#f6c62d" strokeWidth="2.200" />
          </svg>
        </span>
        <span className="h-full w-[5px] rounded-r-[2px] border border-l-0 border-[#59606a] bg-[#24282d]" />
      </button>
      <div className="ml-1 flex gap-1">
        {apps.map((a) => (
          <button key={a.name} aria-label={a.name} className={`flex h-[38px] w-[58px] shrink-0 items-center justify-center rounded-[2px] ${a.skin}`}>{a.icon}</button>
        ))}
      </div>
      <div className="ml-auto flex h-full items-center">
        <button aria-label="Show hidden icons"><svg viewBox="0 0 8 4" className="h-1 w-2" fill="#fff"><path d="M0 4 4 0 8 4Z" /></svg></button>
        <svg viewBox="0 0 16 15" className="ml-[13px] h-[15px] w-4"><path d="M1.500 0V15" stroke="#fff" /><path d="M3 1H7L8 3H14V8H8L7 7H3Z" fill="#fff" /><RedBadge /></svg>
        <svg viewBox="0 0 16 15" className="ml-2 h-[15px] w-4" fill="none" stroke="#fff"><path d="M6 3.500H14.500V11.500H4.500V6M6.500 14H13M9.500 11.500V14M1.500 1V4H5.500V1M3.500 1V3M3.500 4V14H5" /></svg>
        <svg viewBox="0 0 16 15" className="ml-2 h-[15px] w-4"><path d="M1 5H3L7 1V14L3 10H1Z" fill="#fff" /><RedBadge /></svg>
        <div className="ml-[15px] w-[56px] text-center text-[12px] leading-[17px] whitespace-nowrap">
          <div>12:41 PM</div>
          <div>3/28/2014</div>
        </div>
        <button aria-label="Show desktop" className="ml-2 h-[38px] w-[14px] border border-[#5c646d] bg-linear-to-b from-[#5a6066] to-[#101418] to-50%" />
      </div>
    </div>
  );
}

export default function App() {
  return (
    <div className={`relative flex h-screen flex-col overflow-hidden bg-[#0c151e] ${ui}`}>
      <ChromeTabs />
      <ChromeToolbar />
      <div className="flex min-h-0 flex-1">
        <SitePage />
        <ChromeScrollbar />
      </div>
      <OperaWindow />
      <Taskbar />
    </div>
  );
}
